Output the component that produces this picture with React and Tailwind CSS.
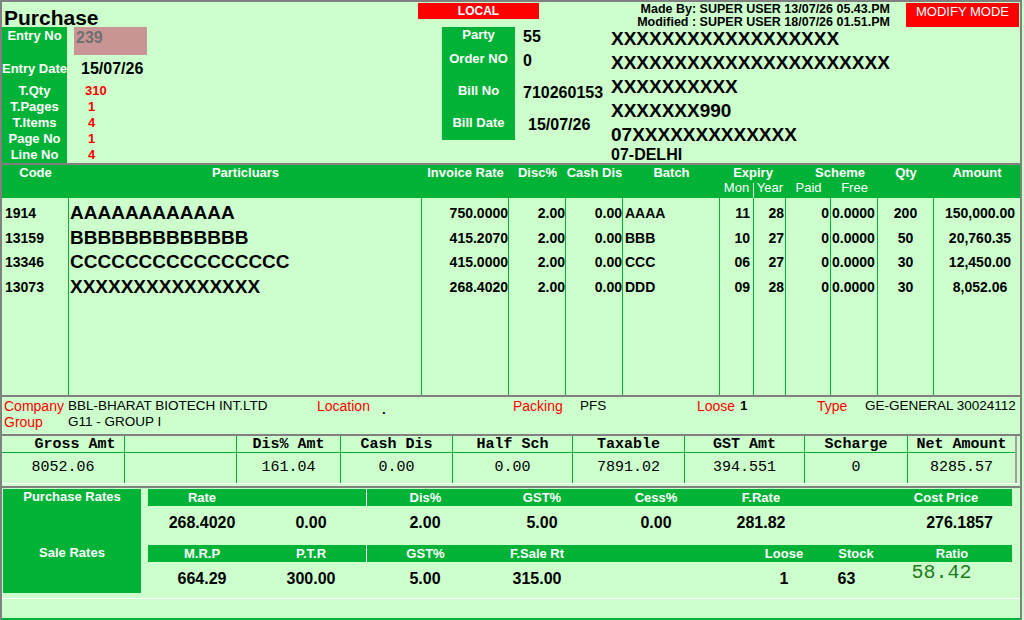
import React from 'react'

const items = [
  { code: '1914', name: 'AAAAAAAAAAAA', rate: '750.0000', disc: '2.00', cash: '0.00', batch: 'AAAA', mon: '11', year: '28', paid: '0', free: '0.0000', qty: '200', amt: '150,000.00' },
  { code: '13159', name: 'BBBBBBBBBBBBB', rate: '415.2070', disc: '2.00', cash: '0.00', batch: 'BBB', mon: '10', year: '27', paid: '0', free: '0.0000', qty: '50', amt: '20,760.35' },
  { code: '13346', name: 'CCCCCCCCCCCCCCCC', rate: '415.0000', disc: '2.00', cash: '0.00', batch: 'CCC', mon: '06', year: '27', paid: '0', free: '0.0000', qty: '30', amt: '12,450.00' },
  { code: '13073', name: 'XXXXXXXXXXXXXXX', rate: '268.4020', disc: '2.00', cash: '0.00', batch: 'DDD', mon: '09', year: '28', paid: '0', free: '0.0000', qty: '30', amt: '8,052.06' },
]

const cols = [
  { k: 'code', w: 'w-[67px]', c: 'pl-[3px] text-[14px]' },
  { k: 'name', w: 'w-[353px]', c: 'pl-px text-[19px]' },
  { k: 'rate', w: 'w-[87px]', c: 'text-right text-[14px]' },
  { k: 'disc', w: 'w-[57px]', c: 'text-right text-[14px]' },
  { k: 'cash', w: 'w-[57px]', c: 'text-right text-[14px]' },
  { k: 'batch', w: 'w-[97px]', c: 'pl-[2px] text-[14px]' },
  { k: 'mon', w: 'w-[34px]', c: 'text-right pr-[3px] text-[14px]' },
  { k: 'year', w: 'w-[32px]', c: 'text-right pr-px text-[14px]' },
  { k: 'paid', w: 'w-[45px]', c: 'text-right pr-px text-[14px]' },
  { k: 'free', w: 'w-[47px]', c: 'pl-px text-[14px]' },
  { k: 'qty', w: 'w-[56px]', c: 'text-center text-[14px]' },
]

const totals = [
  { h: 'Gross Amt', v: '8052.06', w: 'w-[123px]', hc: 'pl-[24px]' },
  { h: '', v: '', w: 'w-[112px]' },
  { h: 'Dis% Amt', v: '161.04', w: 'w-[104px]' },
  { h: 'Cash Dis', v: '0.00', w: 'w-[112px]' },
  { h: 'Half Sch', v: '0.00', w: 'w-[120px]' },
  { h: 'Taxable', v: '7891.02', w: 'w-[112px]' },
  { h: 'GST Amt', v: '394.551', w: 'w-[120px]' },
  { h: 'Scharge', v: '0', w: 'w-[103px]' },
]

const purchase = [
  { h: 'Rate', v: '268.4020', w: 'w-[108px]' },
  { h: '', v: '0.00', w: 'w-[110px]' },
  { h: 'Dis%', v: '2.00', w: 'w-[118px]', line: true },
  { h: 'GST%', v: '5.00', w: 'w-[116px]' },
  { h: 'Cess%', v: '0.00', w: 'w-[112px]' },
  { h: 'F.Rate', v: '281.82', w: 'w-[98px]' },
  { h: '', v: '', w: 'w-[70px]' },
  { h: 'Cost Price', v: '276.1857', w: 'w-[132px]', vc: 'pl-[27px]' },
]

const sale = [
  { h: 'M.R.P', v: '664.29', w: 'w-[108px]' },
  { h: 'P.T.R', v: '300.00', w: 'w-[110px]' },
  { h: 'GST%', v: '5.00', w: 'w-[118px]', line: true },
  { h: 'F.Sale Rt', v: '315.00', w: 'w-[106px]' },
  { h: '', v: '', w: 'w-[158px]' },
  { h: 'Loose', v: '1', w: 'w-[72px]' },
  { h: 'Stock', v: '63', w: 'w-[72px]', vc: 'pr-[19px]' },
]

function RateBar({ data, last }) {
  return (
    <div className="h-[17px] flex bg-[#00b336] text-white font-bold text-[13px] leading-[17px]">
      {data.map((d, i) => (
        <div key={i} className={`${d.w} text-center ${d.line ? 'border-l border-white' : ''}`}>{d.h}</div>
      ))}
      {last && <div className="flex-1 text-center">{last}</div>}
    </div>
  )
}

export default function App() {
  const xLines = ['X'.repeat(18), 'X'.repeat(22), 'X'.repeat(10), 'XXXXXXX990', '07' + 'X'.repeat(13)]
  const leftVals = [
    { v: '310', c: 'pl-[18px]' },
    { v: '1', c: 'pl-[21px]' },
    { v: '4', c: 'pl-[21px]' },
    { v: '1', c: 'pl-[21px]' },
    { v: '4', c: 'pl-[21px]' },
  ]

  return (
    <div className="w-[1024px] h-[620px] bg-[#ccffcc] overflow-hidden font-['Liberation_Sans',Arial,sans-serif] text-black">
      <div className="w-[1022px] h-[620px] border-l-2 border-t-2 border-r-2 border-[#808080] flex flex-col">

        {/* header block */}
        <div className="h-[163px] flex border-b-2 border-[#808080]">
          <div className="w-[416px] flex flex-col">
            <div className="h-[25px] pl-[2px] pt-[7px] text-[21px] font-bold leading-[18px]">Purchase</div>
            <div className="flex">
              <div className="w-[65px] bg-[#00b336] text-white font-bold text-[13px] text-center flex flex-col whitespace-nowrap">
                <div className="h-[28px] pt-px leading-[16px]">Entry No</div>
                <div className="h-[28px] leading-[28px]">Entry Date</div>
                {['T.Qty', 'T.Pages', 'T.Items', 'Page No', 'Line No'].map(l => (
                  <div key={l} className="h-[16px] leading-[16px]">{l}</div>
                ))}
              </div>
              <div className="flex flex-col">
                <div className="h-[28px] pl-[7px]">
                  <div className="w-[73px] h-[28px] bg-[#c89494] pl-[2px] pt-px leading-[20px] text-[16px] font-bold text-[#707070]">239</div>
                </div>
                <div className="h-[28px] leading-[28px] pl-[14px] text-[16px] font-bold">15/07/26</div>
                {leftVals.map((r, i) => (
                  <div key={i} className={`h-[16px] leading-[16px] text-[13px] font-bold text-[#ff0000] ${r.c}`}>{r.v}</div>
                ))}
              </div>
            </div>
          </div>

          <div className="w-[192px] flex flex-col">
            <div className="mt-px h-[16px] w-[121px] bg-[#ff0000] text-white text-[12px] font-bold text-center leading-[16px]">LOCAL</div>
            <div className="mt-[8px] ml-[24px] flex">
              <div className="w-[73px] h-[113px] bg-[#00b336] text-white font-bold text-[13px] text-center flex flex-col whitespace-nowrap">
                <div className="h-[16px] leading-[16px]">Party</div>
                <div className="mt-[8px] h-[16px] leading-[16px]">Order NO</div>
                <div className="mt-[16px] h-[16px] leading-[16px]">Bill No</div>
                <div className="mt-[16px] h-[16px] leading-[16px]">Bill Date</div>
              </div>
              <div className="ml-[8px] pt-[2px] flex flex-col text-[16px] font-bold whitespace-nowrap">
                <div className="h-[16px] leading-[16px]">55</div>
                <div className="mt-[8px] h-[16px] leading-[16px]">0</div>
                <div className="mt-[16px] h-[16px] leading-[16px]">710260153</div>
                <div className="mt-[16px] h-[16px] leading-[16px] pl-[5px]">15/07/26</div>
              </div>
            </div>
          </div>

          <div className="flex-1 flex flex-col">
            <div className="h-[25px] flex justify-end items-start">
              <div className="pt-px text-right text-[12.5px] font-bold leading-[13px] whitespace-nowrap">
                <div>Made By: SUPER USER 13/07/26 05.43.PM</div>
                <div>Modified : SUPER USER 18/07/26 01.51.PM</div>
              </div>
              <div className="ml-[16px] mt-px mr-px w-[113px] h-[24px] bg-[#ff0000] text-white text-[13px] text-center leading-[16px] pt-px">MODIFY MODE</div>
            </div>
            <div className="pl-px text-[19px] font-bold leading-[24px] whitespace-nowrap">
              {xLines.map((l, i) => <div key={i}>{l}</div>)}
            </div>
            <div className="pl-px text-[16px] font-bold leading-[16px]">07-DELHI</div>
          </div>
        </div>

        {/* grid header */}
        <div className="h-[33px] flex bg-[#00b336] text-white font-bold text-[13px] leading-[16px] whitespace-nowrap">
          <div className="w-[67px] text-center">Code</div>
          <div className="w-[353px] text-center">Particluars</div>
          <div className="w-[87px] text-center">Invoice Rate</div>
          <div className="w-[57px] text-center">Disc%</div>
          <div className="w-[57px] text-center">Cash Dis</div>
          <div className="w-[97px] text-center">Batch</div>
          <div className="w-[66px] flex flex-col">
            <div className="text-center">Expiry</div>
            <div className="flex flex-1 font-normal text-[13px] leading-[13px]">
              <div className="w-[33px] text-center">Mon</div>
              <div className="w-[33px] mt-[2px] border-l border-[#dff5df] text-center">
                <div className="-mt-[2px]">Year</div>
              </div>
            </div>
          </div>
          <div className="w-[92px] flex flex-col">
            <div className="text-center pl-[16px]">Scheme</div>
            <div className="flex font-normal text-[13px] leading-[14px]">
              <div className="w-[45px] text-center">Paid</div>
              <div className="w-[47px] text-center">Free</div>
            </div>
          </div>
          <div className="w-[56px] text-center">Qty</div>
          <div className="flex-1 text-center">Amount</div>
        </div>

        {/* grid rows */}
        <div className="h-[199px] flex border-b-2 border-[#808080] font-bold whitespace-nowrap">
          {cols.map(col => (
            <div key={col.k} className={`${col.w} h-full border-r border-[#00b336] pt-[3px]`}>
              {items.map((it, i) => (
                <div key={i} className={`h-[24.5px] leading-[24.5px] ${col.c}`}>{it[col.k]}</div>
              ))}
            </div>
          ))}
          <div className="flex-1 h-full pt-[3px]">
            {items.map((it, i) => (
              <div key={i} className="h-[24.5px] leading-[24.5px] text-center pl-[6px] text-[14px]">{it.amt}</div>
            ))}
          </div>
        </div>

        {/* company block */}
        <div className="h-[39px] pt-px border-b-2 border-[#808080] text-[13.5px] whitespace-nowrap">
          <div className="h-[16px] leading-[16px] flex pl-[2px]">
            <span className="w-[64px] text-[#ff0000] text-[14px]">Company</span>
            <span className="w-[249px]">BBL-BHARAT BIOTECH INT.LTD</span>
            <span className="w-[65px] text-[#ff0000] text-[14px]">Location</span>
            <span className="w-[131px]"><span className="inline-block translate-y-[4px] font-bold">.</span></span>
            <span className="w-[67px] text-[#ff0000] text-[14px]">Packing</span>
            <span className="w-[117px]">PFS</span>
            <span className="w-[43px] text-[#ff0000] text-[14px]">Loose</span>
            <span className="w-[77px] font-bold">1</span>
            <span className="w-[48px] text-[#ff0000] text-[14px]">Type</span>
            <span>GE-GENERAL 30024112</span>
          </div>
          <div className="h-[16px] leading-[16px] flex pl-[2px]">
            <span className="w-[64px] text-[#ff0000] text-[14px]">Group</span>
            <span>G11 - GROUP I</span>
          </div>
        </div>

        {/* totals */}
        <div className="h-[47px] flex font-['Liberation_Mono',monospace] text-[15px] whitespace-nowrap">
          {totals.map((t, i) => (
            <div key={i} className={`${t.w} flex flex-col border-r border-[#00b336]`}>
              <div className={`h-[17px] leading-[17px] font-bold text-center border-b border-[#00b336] ${t.hc || ''}`}>{t.h}</div>
              <div className="h-[30px] leading-[30px] text-center">{t.v}</div>
            </div>
          ))}
          <div className="w-[109px] flex flex-col border-r-2 border-[#a0a0a0]">
            <div className="h-[17px] leading-[17px] font-bold text-center border-b border-[#00b336]">Net Amount</div>
            <div className="h-[30px] leading-[30px] text-center">8285.57</div>
          </div>
        </div>
        <div className="h-[3px] border-t border-white"></div>

        {/* rates */}
        <div className="h-[112px] border-t-2 border-[#808080] pt-px flex">
          <div className="ml-px w-[138px] h-[104px] bg-[#00b336] text-white font-bold text-[13px] text-center leading-[16px] flex flex-col">
            <div>Purchase Rates</div>
            <div className="mt-[40px]">Sale Rates</div>
          </div>
          <div className="ml-[7px] w-[864px] flex flex-col whitespace-nowrap">
            <RateBar data={purchase} />
            <div className="h-[39px] flex pt-[9px] text-[16px] font-bold leading-[16px]">
              {purchase.map((d, i) => (
                <div key={i} className={`${d.w} text-center ${d.vc || ''}`}>{d.v}</div>
              ))}
            </div>
            <RateBar data={sale} last="Ratio" />
            <div className="flex text-[16px] font-bold leading-[16px]">
              {sale.map((d, i) => (
                <div key={i} className={`${d.w} pt-[9px] text-center ${d.vc || ''}`}>{d.v}</div>
              ))}
              <div className="flex-1 pt-[1px] pr-[21px] text-center font-['Liberation_Mono',monospace] font-normal text-[20px] leading-[20px] text-[#1f7a1f]">58.42</div>
            </div>
          </div>
        </div>
        <div className="h-px bg-white"></div>
        <div className="h-[21px] border-b-2 border-[#00b336]"></div>
      </div>
    </div>
  )
}
